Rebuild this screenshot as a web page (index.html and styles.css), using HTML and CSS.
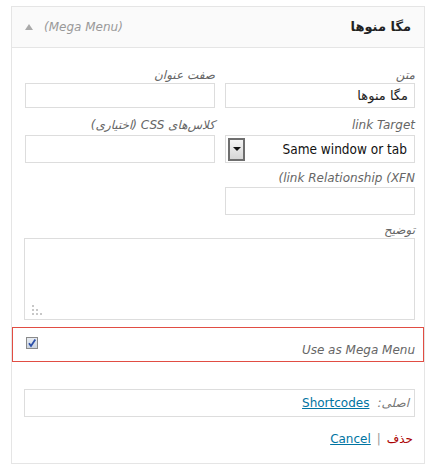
FILE: index.html
```html
<!DOCTYPE html>
<html lang="fa" dir="rtl">
<head>
<meta charset="utf-8">
<link rel="stylesheet" href="styles.css">
</head>
<body>
<div class="panel">
  <div class="head">
    <span class="title">مگا منوها</span>
    <span class="type"><span dir="ltr">(Mega Menu)</span><span class="arrow"></span></span>
  </div>
  <div class="settings">
    <div class="row row-first">
      <div class="field">
        <div class="lbl">متن</div>
        <div class="input short">مگا منوها</div>
      </div>
      <div class="field">
        <div class="lbl">صفت عنوان</div>
        <div class="input short"></div>
      </div>
    </div>
    <div class="row row-gap">
      <div class="field">
        <div class="lbl lbl-tall">link Target</div>
        <div class="input select">
          <span class="sel-text">Same window or tab</span>
          <span class="sel-btn"><span class="sel-tri"></span></span>
        </div>
      </div>
      <div class="field">
        <div class="lbl lbl-tall">کلاس‌های CSS (اختیاری)</div>
        <div class="input"></div>
      </div>
    </div>
    <div class="row row-gap2">
      <div class="field">
        <div class="lbl lbl-mid">link Relationship (XFN<span class="iso">)</span></div>
        <div class="input"></div>
      </div>
    </div>
    <div class="desc">
      <div class="lbl">توضیح</div>
      <div class="textarea">
        <svg class="grip" width="10" height="10" viewBox="0 0 10 10">
          <rect x="0" y="0" width="2" height="2" fill="#c8c8c8"/>
          <rect x="0" y="4" width="2" height="2" fill="#c8c8c8"/>
          <rect x="4" y="4" width="2" height="2" fill="#c8c8c8"/>
          <rect x="0" y="8" width="2" height="2" fill="#c8c8c8"/>
          <rect x="4" y="8" width="2" height="2" fill="#c8c8c8"/>
          <rect x="8" y="8" width="2" height="2" fill="#c8c8c8"/>
        </svg>
      </div>
    </div>
    <div class="mega">
      <span class="mega-lbl">Use as Mega Menu</span>
      <svg class="check" width="12" height="12" viewBox="0 0 12 12">
        <defs>
          <linearGradient id="cb" x1="0" y1="0" x2="0" y2="1">
            <stop offset="0" stop-color="#e9edf3"/>
            <stop offset="1" stop-color="#c9d1dd"/>
          </linearGradient>
        </defs>
        <rect x="0.5" y="0.5" width="11" height="11" fill="url(#cb)" stroke="#8a8a8a"/>
        <path d="M3 6.2 L5 9 L9.3 2.6" fill="none" stroke="#2b4fa8" stroke-width="1.8"/>
      </svg>
    </div>
    <div class="original">
      <span class="orig-lbl">اصلی:</span>
      <a class="link" href="#">Shortcodes</a>
    </div>
    <div class="actions">
      <a class="delete" href="#">حذف</a>
      <span class="sep">|</span>
      <a class="link" href="#">Cancel</a>
    </div>
  </div>
</div>
</body>
</html>
```

FILE: styles.css
```css
html, body {
  margin: 0;
  padding: 0;
  background: #fff;
}
body {
  font-family: "DejaVu Sans", Tahoma, sans-serif;
  font-size: 12px;
  color: #333;
}
.panel {
  margin: 6px 3px 0 11px;
  width: 414px;
  height: 458px;
  box-sizing: border-box;
  border: 1px solid #e5e5e5;
}
.head {
  height: 41px;
  box-sizing: border-box;
  border-bottom: 1px solid #e5e5e5;
  background: #fafafa;
  display: flex;
  align-items: center;
  justify-content: space-between;
  padding: 0 13px 0 13px;
}
.title {
  font-weight: bold;
  font-size: 13px;
  color: #222;
  margin-top: -1px;
}
.type {
  display: flex;
  align-items: center;
  gap: 11px;
  font-style: italic;
  color: #999;
  font-size: 12px;
}
.arrow {
  width: 0;
  height: 0;
  border-left: 4px solid transparent;
  border-right: 4px solid transparent;
  border-bottom: 6px solid #aaa;
}
.settings {
  padding: 21px 9px 0 12px;
}
.row {
  display: flex;
  gap: 10px;
}
.row-gap { margin-top: 10px; }
.row-gap2 { margin-top: 8px; }
.field {
  width: 190px;
}
.lbl {
  height: 14px;
  line-height: 12px;
  font-style: italic;
  color: #666;
  font-size: 12px;
}
.lbl-tall { height: 17px; line-height: 14px; }
.lbl-mid { height: 16px; line-height: 14px; }
.iso { unicode-bidi: isolate; }
.input {
  height: 28px;
  box-sizing: border-box;
  border: 1px solid #ddd;
  background: #fff;
  display: flex;
  align-items: center;
  padding: 0 6px;
  font-size: 13px;
  color: #222;
}
.input.short { height: 25px; }
.select {
  justify-content: space-between;
  padding: 0 7px 0 2px;
}
.sel-text {
  font-family: "DejaVu Sans Condensed", "DejaVu Sans", sans-serif;
  font-size: 13.5px;
  color: #111;
}
.sel-btn {
  width: 17px;
  height: 23px;
  box-sizing: border-box;
  border: 2px solid #6e6e6e;
  background: linear-gradient(#f4f4f4, #d6d6d6);
  display: flex;
  align-items: center;
  justify-content: center;
}
.sel-tri {
  width: 0;
  height: 0;
  border-left: 4px solid transparent;
  border-right: 4px solid transparent;
  border-top: 4px solid #111;
}
.desc { margin-top: 9px; }
.textarea {
  position: relative;
  height: 82px;
  box-sizing: border-box;
  border: 1px solid #ddd;
  background: #fff;
}
.grip {
  position: absolute;
  left: 7px;
  bottom: 4px;
}
.mega {
  margin: 7px -9px 0 -12px;
  height: 35px;
  box-sizing: border-box;
  border: 1px solid #e14d43;
  display: flex;
  justify-content: space-between;
  align-items: flex-start;
  padding: 0 8px 0 13px;
}
.mega-lbl {
  font-style: italic;
  color: #666;
  font-size: 12px;
  margin-top: 15px;
}
.check { margin-top: 9px; }
.original {
  margin-top: 27px;
  height: 28px;
  box-sizing: border-box;
  border: 1px solid #ddd;
  display: flex;
  align-items: center;
  gap: 8px;
  padding: 0 5px;
  font-size: 12px;
}
.orig-lbl {
  font-style: italic;
  color: #777;
}
.link {
  color: #0074a2;
  text-decoration: underline;
  font-size: 12px;
}
.actions {
  margin-top: 15px;
  display: flex;
  align-items: center;
  gap: 6px;
  padding-right: 2px;
  font-size: 12px;
}
.delete {
  color: #a00;
  text-decoration: none;
}
.sep { color: #999; }
```
